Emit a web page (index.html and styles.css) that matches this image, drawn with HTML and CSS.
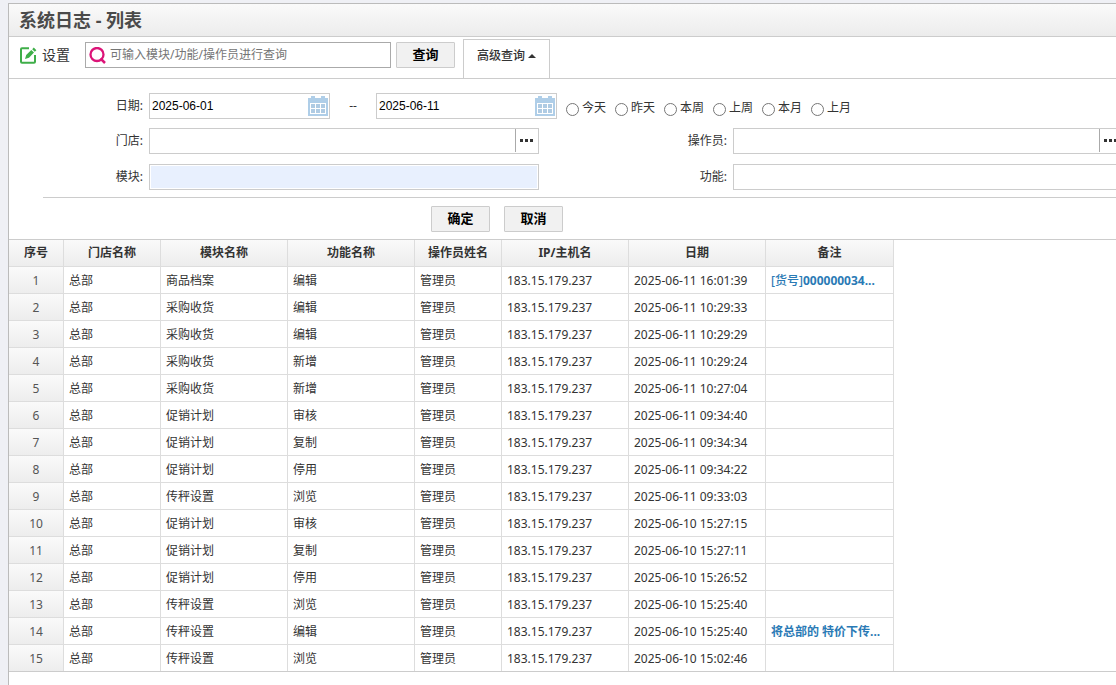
FILE: index.html
```html
<!DOCTYPE html>
<html lang="zh-CN">
<head>
<meta charset="utf-8">
<title>系统日志 - 列表</title>
<link rel="stylesheet" href="styles.css">
</head>
<body>
<svg class="defs" width="0" height="0" aria-hidden="true">
  <symbol id="calendar" viewBox="0 0 20 20">
    <path fill="#afcee8" d="M0 2h3V0h4v2h6V0h4v2h3v18H0z"/>
    <path fill="#fff" d="M2 7h16v11H2z"/>
    <path fill="#afcbe3" d="M3 8h4v4H3zM8 8h4v4H8zM13 8h4v4h-4zM3 13h4v4H3zM8 13h4v4H8zM13 13h4v4h-4z"/>
  </symbol>
  <symbol id="dots" viewBox="0 0 13 3">
    <path fill="#333" d="M0 0h3v3H0zM5 0h3v3H5zM10 0h3v3h-3z"/>
  </symbol>
</svg>
<main class="panel">
  <header class="title-bar"><h1 class="title">系统日志 - 列表</h1></header>
  <div class="toolbar">
    <button class="settings" type="button">
      <svg class="settings-icon" viewBox="0 0 17 17" aria-hidden="true">
        <path d="M9 1.200H2Q1 1.200 1 2.200V14.800Q1 15.800 2 15.800H14Q15 15.800 15 14.800V8" fill="none" stroke="#3fae49" stroke-width="2"/>
        <path d="M5 12L6.200 8L11.300 3L14 5.600L9 10.700ZM12.200 2.200L13.800 .6L16.400 3.200L14.800 4.800Z" fill="#3fae49"/>
      </svg>
      <span>设置</span>
    </button>
    <label class="search">
      <svg class="search-icon" viewBox="0 0 17 17" aria-hidden="true">
        <circle cx="8" cy="7.500" r="6.500" fill="none" stroke="#dc1478" stroke-width="2.300"/>
        <path d="M11.500 11.500L16 16" stroke="#dc1478" stroke-width="2.500"/>
      </svg>
      <input class="search-input" type="text" aria-label="查询" placeholder="可输入模块/功能/操作员进行查询">
    </label>
    <button class="btn" type="button">查询</button>
    <button class="tab" type="button">高级查询<span class="caret"></span></button>
  </div>
  <form class="filters">
    <div class="fields">
      <div class="row row-wide">
        <label class="label" for="from">日期:</label>
        <div class="date"><input class="date-input" id="from" type="text" value="2025-06-01"><svg class="calendar" aria-hidden="true"><use href="#calendar"/></svg></div>
        <span class="dash">--</span>
        <div class="date"><input class="date-input" type="text" aria-label="结束日期" value="2025-06-11"><svg class="calendar" aria-hidden="true"><use href="#calendar"/></svg></div>
        <div class="ranges">
          <label class="range"><input class="radio" type="radio" name="range">今天</label>
          <label class="range"><input class="radio" type="radio" name="range">昨天</label>
          <label class="range"><input class="radio" type="radio" name="range">本周</label>
          <label class="range"><input class="radio" type="radio" name="range">上周</label>
          <label class="range"><input class="radio" type="radio" name="range">本月</label>
          <label class="range"><input class="radio" type="radio" name="range">上月</label>
        </div>
      </div>
      <div class="row">
        <label class="label" for="store">门店:</label>
        <div class="field"><input class="field-input" id="store" type="text"><button class="more" type="button" aria-label="选择门店"><svg class="dots"><use href="#dots"/></svg></button></div>
      </div>
      <div class="row">
        <label class="label" for="operator">操作员:</label>
        <div class="field"><input class="field-input" id="operator" type="text"><button class="more" type="button" aria-label="选择操作员"><svg class="dots"><use href="#dots"/></svg></button></div>
      </div>
      <div class="row">
        <label class="label" for="module">模块:</label>
        <div class="field"><input class="field-input filled" id="module" type="text"></div>
      </div>
      <div class="row">
        <label class="label" for="function">功能:</label>
        <div class="field"><input class="field-input" id="function" type="text"></div>
      </div>
    </div>
    <div class="actions">
      <button class="btn" type="button">确定</button>
      <button class="btn" type="button">取消</button>
    </div>
  </form>
  <div class="grid">
    <table class="log">
      <colgroup><col class="c-no"><col class="c-store"><col class="c-text"><col class="c-text"><col class="c-user"><col class="c-text"><col class="c-date"><col class="c-note"></colgroup>
      <thead>
        <tr><th>序号</th><th>门店名称</th><th>模块名称</th><th>功能名称</th><th>操作员姓名</th><th>IP/主机名</th><th>日期</th><th>备注</th></tr>
      </thead>
      <tbody>
        <tr><td class="no">1</td><td>总部</td><td>商品档案</td><td>编辑</td><td>管理员</td><td>183.15.179.237</td><td>2025-06-11 16:01:39</td><td><a class="note" href="#"><span class="tag">[货号]</span>000000034...</a></td></tr>
        <tr><td class="no">2</td><td>总部</td><td>采购收货</td><td>编辑</td><td>管理员</td><td>183.15.179.237</td><td>2025-06-11 10:29:33</td><td></td></tr>
        <tr><td class="no">3</td><td>总部</td><td>采购收货</td><td>编辑</td><td>管理员</td><td>183.15.179.237</td><td>2025-06-11 10:29:29</td><td></td></tr>
        <tr><td class="no">4</td><td>总部</td><td>采购收货</td><td>新增</td><td>管理员</td><td>183.15.179.237</td><td>2025-06-11 10:29:24</td><td></td></tr>
        <tr><td class="no">5</td><td>总部</td><td>采购收货</td><td>新增</td><td>管理员</td><td>183.15.179.237</td><td>2025-06-11 10:27:04</td><td></td></tr>
        <tr><td class="no">6</td><td>总部</td><td>促销计划</td><td>审核</td><td>管理员</td><td>183.15.179.237</td><td>2025-06-11 09:34:40</td><td></td></tr>
        <tr><td class="no">7</td><td>总部</td><td>促销计划</td><td>复制</td><td>管理员</td><td>183.15.179.237</td><td>2025-06-11 09:34:34</td><td></td></tr>
        <tr><td class="no">8</td><td>总部</td><td>促销计划</td><td>停用</td><td>管理员</td><td>183.15.179.237</td><td>2025-06-11 09:34:22</td><td></td></tr>
        <tr><td class="no">9</td><td>总部</td><td>传秤设置</td><td>浏览</td><td>管理员</td><td>183.15.179.237</td><td>2025-06-11 09:33:03</td><td></td></tr>
        <tr><td class="no">10</td><td>总部</td><td>促销计划</td><td>审核</td><td>管理员</td><td>183.15.179.237</td><td>2025-06-10 15:27:15</td><td></td></tr>
        <tr><td class="no">11</td><td>总部</td><td>促销计划</td><td>复制</td><td>管理员</td><td>183.15.179.237</td><td>2025-06-10 15:27:11</td><td></td></tr>
        <tr><td class="no">12</td><td>总部</td><td>促销计划</td><td>停用</td><td>管理员</td><td>183.15.179.237</td><td>2025-06-10 15:26:52</td><td></td></tr>
        <tr><td class="no">13</td><td>总部</td><td>传秤设置</td><td>浏览</td><td>管理员</td><td>183.15.179.237</td><td>2025-06-10 15:25:40</td><td></td></tr>
        <tr><td class="no">14</td><td>总部</td><td>传秤设置</td><td>编辑</td><td>管理员</td><td>183.15.179.237</td><td>2025-06-10 15:25:40</td><td><a class="note" href="#">将总部的 特价下传...</a></td></tr>
        <tr><td class="no">15</td><td>总部</td><td>传秤设置</td><td>浏览</td><td>管理员</td><td>183.15.179.237</td><td>2025-06-10 15:02:46</td><td></td></tr>
      </tbody>
    </table>
  </div>
</main>
</body>
</html>
```
FILE: styles.css
```css
* { box-sizing: border-box; }

body {
  margin: 0;
  padding: 3px 0 0 8px;
  min-height: 100vh;
  display: flex;
  flex-direction: column;
  background: #eff0f5;
  color: #333;
  font: 12px/18px "Noto Sans", "Noto Sans CJK SC", sans-serif;
}

button, input { font: inherit; color: inherit; margin: 0; }

.defs { position: absolute; }

.panel {
  flex: 1;
  overflow: hidden;
  background: #fff;
  border-top: 1px solid #bbb;
  border-left: 1px solid #bbb;
}

.title-bar {
  padding: 4px 10px;
  background: linear-gradient(#fafafa, #ececec);
  border-bottom: 1px solid #ccc;
}

.title {
  margin: 0;
  font-size: 18px;
  line-height: 24px;
  color: #4a4a4a;
}

.toolbar {
  display: flex;
  align-items: flex-start;
  height: 42px;
  padding: 5px 10px 0;
  border-bottom: 1px solid #ccc;
}

.settings {
  display: flex;
  align-items: center;
  gap: 5px;
  height: 26px;
  padding: 0 0 0 1px;
  margin-right: 15px;
  border: 0;
  background: none;
  font-size: 14px;
}

.settings-icon { width: 17px; height: 17px; }

.search {
  display: flex;
  align-items: center;
  gap: 4px;
  width: 306px;
  height: 26px;
  padding-left: 3px;
  margin-right: 5px;
  border: 1px solid #aaa;
}

.search-icon { width: 17px; height: 17px; flex: none; }

.search-input {
  flex: 1;
  min-width: 0;
  padding: 0;
  border: 0;
  outline: 0;
  background: none;
}

.search-input::placeholder { color: #757575; opacity: 1; }

.btn {
  width: 59px;
  height: 26px;
  padding: 0 0 2px;
  border: 1px solid #ccc;
  border-radius: 1px;
  background: #f1f1f1;
  color: #000;
  font-size: 13px;
  font-weight: bold;
}

.tab {
  display: flex;
  align-items: center;
  justify-content: center;
  gap: 3px;
  width: 87px;
  height: 39px;
  padding: 0 0 6px;
  margin: -3px 0 0 8px;
  border: 1px solid #ccc;
  border-bottom: 0;
  background: #fff;
  font-weight: 500;
}

.caret {
  border: 4px solid transparent;
  border-top: 0;
  border-bottom-color: #333;
}

.fields {
  display: grid;
  grid-template-columns: 550px 550px;
  column-gap: 34px;
  row-gap: 10px;
  margin-left: 34px;
  padding: 14px 0 7px;
  border-bottom: 1px solid #ccc;
}

.row { display: flex; align-items: center; height: 26px; }

.row-wide { grid-column: 1 / -1; margin-bottom: -1px; }

.label {
  width: 100px;
  margin-right: 6px;
  text-align: right;
}

.date {
  display: flex;
  align-items: center;
  width: 181px;
  height: 26px;
  padding: 0 1px 0 2px;
  border: 1px solid #ccc;
}

.date-input {
  flex: 1;
  min-width: 0;
  padding: 0;
  border: 0;
  outline: 0;
  color: #000;
  font-family: "Liberation Sans", sans-serif;
}

.calendar { width: 20px; height: 20px; flex: none; }

.dash { width: 46px; text-align: center; }

.ranges { display: flex; gap: 9px; margin: 4px 0 0 9px; }

.range { display: flex; align-items: center; gap: 3px; }

.radio { width: 13px; height: 13px; margin-top: 2px; }

.field {
  display: flex;
  width: 390px;
  height: 26px;
  border: 1px solid #ccc;
}

.field-input {
  flex: 1;
  min-width: 0;
  padding: 0 3px;
  border: 0;
  outline: 0;
  background: #fff;
}

.filled { background: #e8f0fe; border: 1px solid #fff; }

.more {
  width: 23px;
  height: 23px;
  padding: 0 2px 0 0;
  display: flex;
  align-items: center;
  justify-content: center;
  border: 0;
  border-left: 1px solid #aaa;
  background: #fff;
}

.dots { width: 13px; height: 3px; }

.actions { display: flex; gap: 14px; padding: 8px 0 7px 422px; }

.grid { border-top: 1px solid #ccc; border-bottom: 1px solid #ccc; }

.log {
  width: 885px;
  table-layout: fixed;
  border-collapse: separate;
  border-spacing: 0;
}

.c-no { width: 55px; }
.c-store { width: 97px; }
.c-text { width: 127px; }
.c-user { width: 87px; }
.c-date { width: 137px; }
.c-note { width: 128px; }

.log th, .log td {
  height: 27px;
  padding: 0 5px;
  border-right: 1px solid #ddd;
  border-bottom: 1px solid #ddd;
  text-align: left;
  white-space: nowrap;
}

.log td { padding-top: 2px; }

.log tbody tr:last-child td { height: 26px; border-bottom: 0; }

.log th, .log .no {
  background: linear-gradient(#fafafa, #ededed);
  text-align: center;
}

.log .no { color: #555; }

.note { color: #2a7ab5; font-weight: bold; text-decoration: none; }

.tag { font-weight: 500; }
```
